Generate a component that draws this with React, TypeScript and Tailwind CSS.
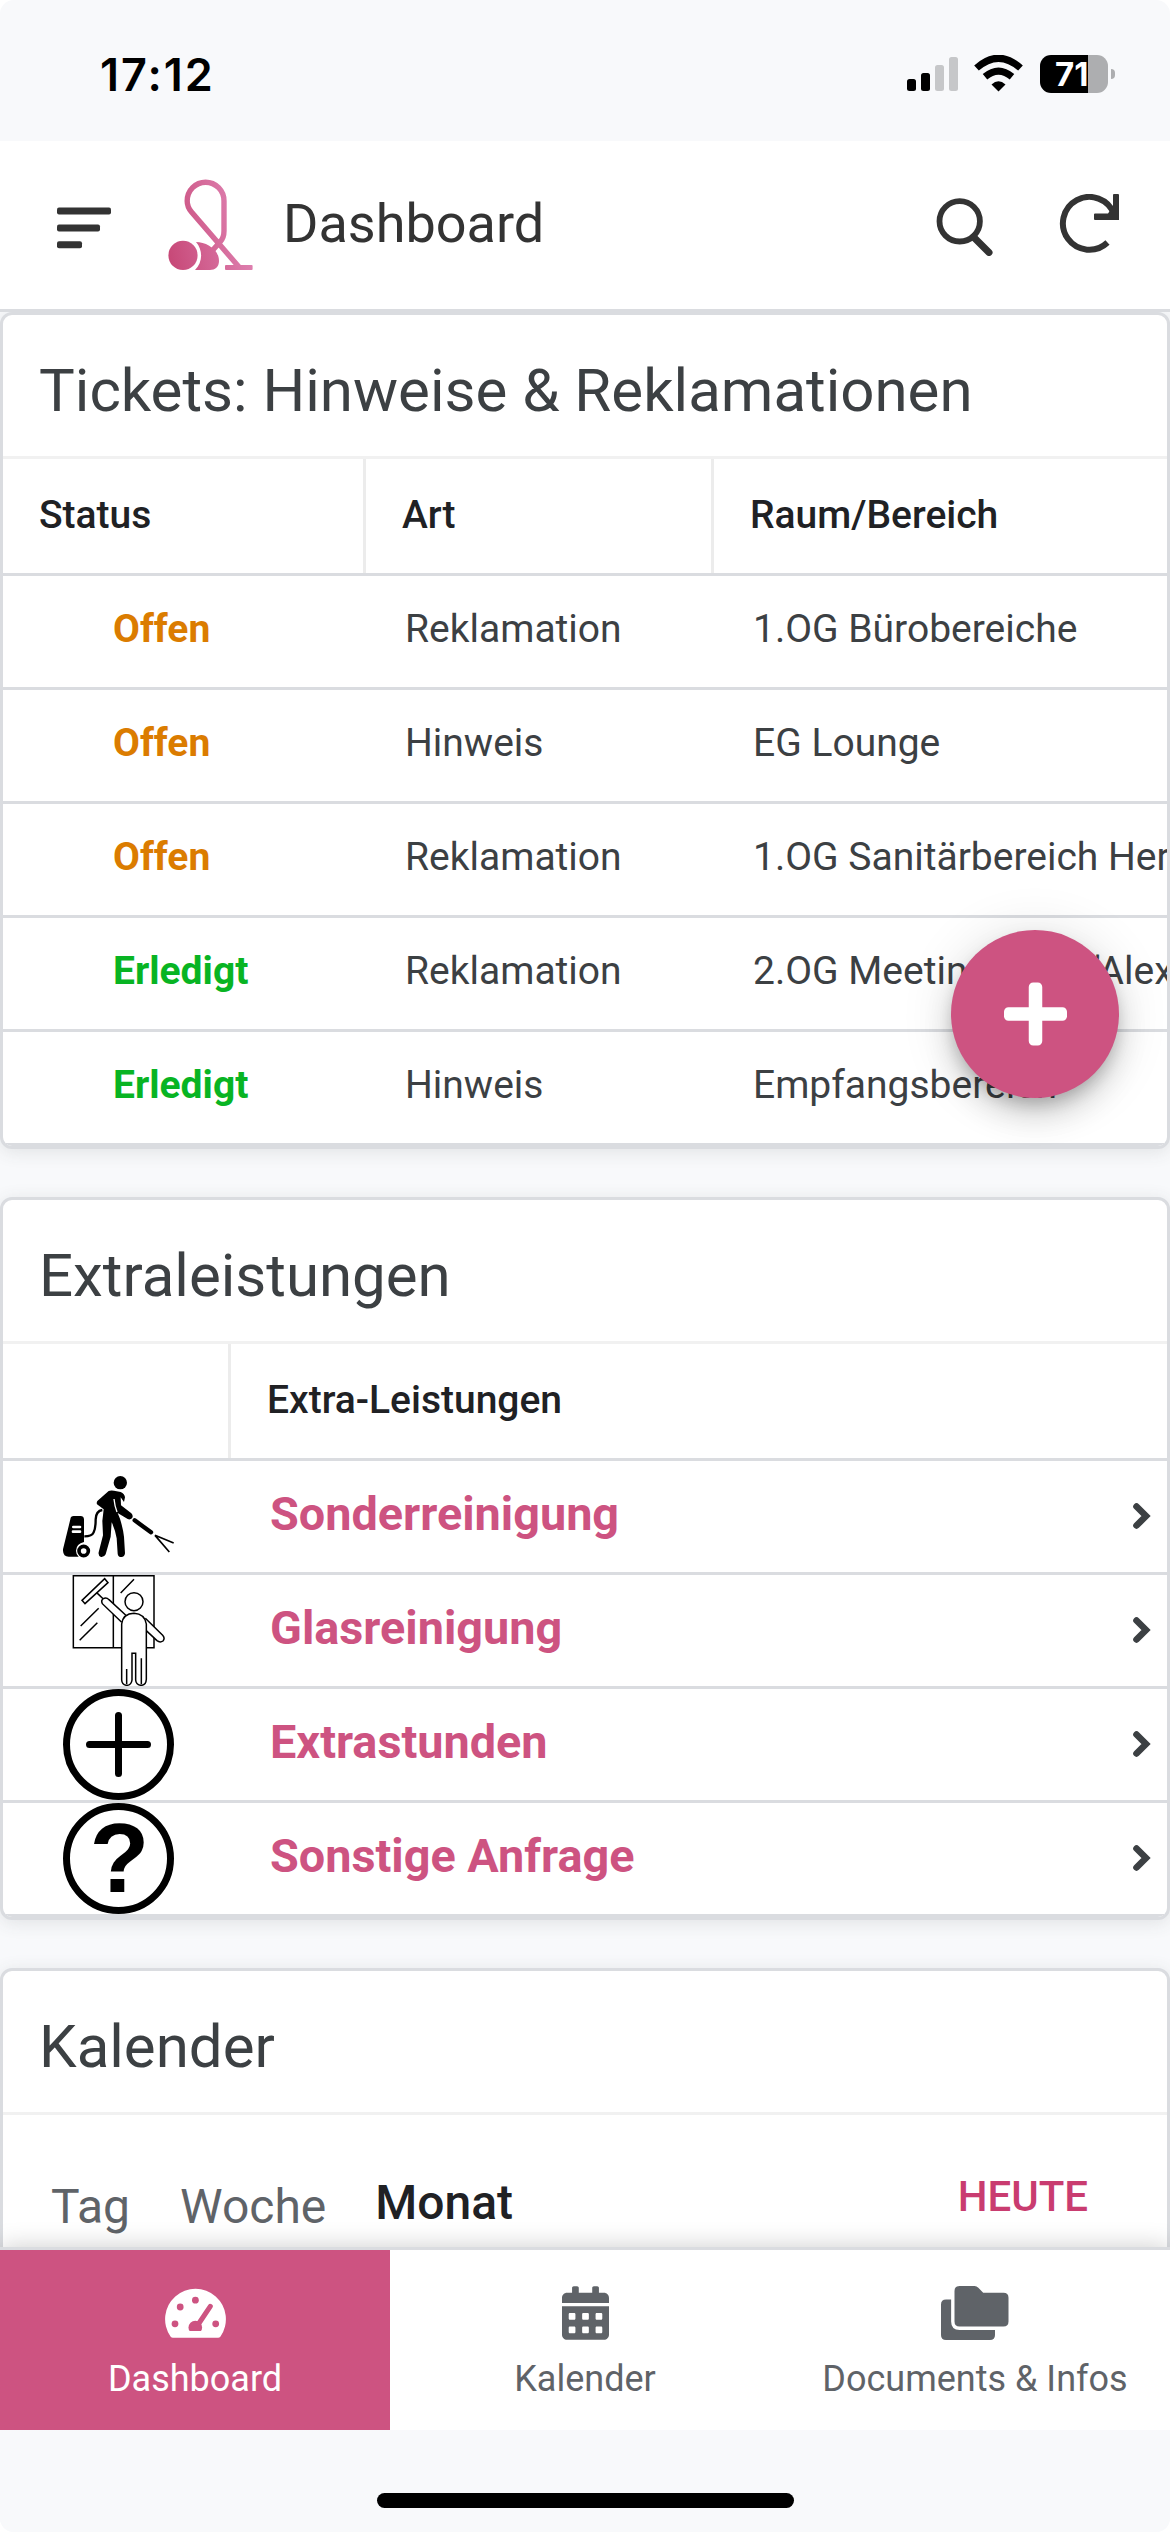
import { FaCalendarAlt, FaPlus } from "react-icons/fa";

const tickets = [
  { status: "Offen", art: "Reklamation", raum: "1.OG Bürobereiche" },
  { status: "Offen", art: "Hinweis", raum: "EG Lounge" },
  { status: "Offen", art: "Reklamation", raum: "1.OG Sanitärbereich Herren" },
  { status: "Erledigt", art: "Reklamation", raum: '2.OG Meetingraum "Alex"' },
  { status: "Erledigt", art: "Hinweis", raum: "Empfangsbereich" },
];

const extras = [
  { label: "Sonderreinigung", Icon: PressureWasherIcon },
  { label: "Glasreinigung", Icon: WindowCleanerIcon },
  { label: "Extrastunden", Icon: PlusCircleIcon },
  { label: "Sonstige Anfrage", Icon: QuestionIcon },
];

function PressureWasherIcon() {
  return (
    <svg viewBox="39 3 333 333" className="size-[111px]">
      <circle cx="211" cy="68" r="20" />
      <path d="M176 93 Q182 90 192 92 L212 96 Q224 102 225 112 L222 126 L212 112 L213 136 L244 160 Q251 168 246 175 Q240 180 233 177 L203 159 L210 176 Q219 205 222 230 L225 280 Q224 291 214 291 Q204 291 203 281 L200 235 Q196 210 185 187 L182 230 L167 283 Q163 292 153 291 Q144 287 146 277 L159 226 L157 183 L161 148 L141 133 Q139 128 142 123 Z" />
      <path d="M192 117 Q194 138 201 156" fill="none" stroke="#fff" strokeWidth="4" />
      <path d="M157 150 Q138 153 137 178 Q137 205 131 217 Q126 229 103 229" fill="none" stroke="#000" strokeWidth="7" />
      <path d="M61 178 Q62 168 71 168 H92 Q101 168 102 178 V246 Q79 251 78 272 Q78 283 86 290 H56 Q38 290 39 268 Z" />
      <path d="M70 201 H90 M69 215 H90" stroke="#fff" strokeWidth="8" strokeLinecap="round" />
      <circle cx="101" cy="273" r="14" fill="none" stroke="#000" strokeWidth="11" />
      <path d="M254 181 L303 217" stroke="#000" strokeWidth="13" strokeLinecap="round" />
      <path d="M371 249 L315 226 L358 276" fill="none" stroke="#000" strokeWidth="5" />
    </svg>
  );
}

function WindowCleanerIcon() {
  return (
    <svg viewBox="39 345 333 333" className="size-[111px]" fill="none" stroke="#000" strokeWidth="4.5">
      <path d="M70 347 H312 V563 H70 Z M190 347 V563" />
      <path d="M212 399 L252 358 M92 498 L146 445 M89 541 L142 488" />
      <path d="M96 421 L164 356 L174 368 L105 431 Z" fill="#fff" />
      <path d="M140 398 L160 417" />
      <path d="M215 487 L157 431 Q152 421 160 416 Q169 411 177 419 L230 468" fill="#fff" />
      <path d="M286 475 L338 526 Q346 535 339 543 Q330 549 321 542 L288 511" fill="#fff" />
      <path d="M215 660 V492 Q219 461 252 460 Q284 462 289 492 V658 Q288 676 273 676 Q258 675 257 660 V580 H246 V660 Q244 676 230 676 Q216 675 215 660 Z" fill="#fff" />
      <path d="M230 627 V672 M274 595 V672" />
      <circle cx="252" cy="425" r="27" fill="#fff" />
    </svg>
  );
}

function PlusCircleIcon() {
  return (
    <svg viewBox="0 0 111 111" className="size-[111px]" fill="none" stroke="#000">
      <circle cx="55.5" cy="55.5" r="52" strokeWidth="7" />
      <path d="M26.5 55.5 H84.5 M55.5 26.5 V84.5" strokeWidth="7" strokeLinecap="round" />
    </svg>
  );
}

function QuestionIcon() {
  return (
    <svg viewBox="0 0 111 111" className="size-[111px]">
      <circle cx="55.5" cy="55.5" r="52" strokeWidth="7" fill="none" stroke="#000" />
      <text x="56.5" y="88.5" textAnchor="middle" className="font-['Liberation_Sans',sans-serif] text-[98px] font-bold">?</text>
    </svg>
  );
}

function GaugeIcon() {
  return (
    <svg viewBox="0 0 61 54" className="h-[54px] w-[61px]">
      <path d="M5.5 50.5 A30.4 30.4 0 1 1 55.5 50.5 Q54.5 51.7 53 51.7 H8 Q6.5 51.7 5.5 50.5Z" fill="currentColor" />
      <g fill="#cd5381">
        <circle cx="30.4" cy="14.2" r="3.4" />
        <circle cx="15.2" cy="21" r="3.4" />
        <circle cx="10" cy="37.8" r="3.4" />
        <circle cx="50.7" cy="37.8" r="3.4" />
        <path d="M24.6 45 Q23.5 43.5 23.5 41.5 A6.8 6.8 0 0 1 37.1 41.5 Q37.1 43.5 36 45Z" />
      </g>
      <path d="M45.3 20.3 L33.5 38" stroke="#cd5381" strokeWidth="5" strokeLinecap="round" />
    </svg>
  );
}

function FoldersIcon() {
  return (
    <svg viewBox="0 0 640 512" className="h-[54px] w-[67.5px]" fill="currentColor">
      <path d="M592 64H400L354 16Q338 0 318 0H176Q128 0 128 48V336Q128 384 176 384H592Q640 384 640 336V112Q640 64 592 64Z" />
      <path d="M464 512H48Q0 512 0 464V176Q0 128 48 128H96V336Q96 416 176 416H512V464Q512 512 464 512Z" />
    </svg>
  );
}

function LogoIcon() {
  return (
    <svg viewBox="168 178 86 92" className="h-[92px] w-[86px]">
      <defs>
        <linearGradient id="logo" gradientUnits="userSpaceOnUse" x1="168" y1="255" x2="253" y2="235">
          <stop offset="0" stopColor="#c74877" />
          <stop offset="1" stopColor="#e084b4" />
        </linearGradient>
      </defs>
      <circle cx="183" cy="254.4" r="14.6" fill="url(#logo)" />
      <path d="M196 241 C206 241 219 248 219 260 C219 266 215 269 210 269 H195 C203 261 203 249 196 241Z" fill="url(#logo)" />
      <path d="M239 266 L191.5 211 Q187.2 206 187.2 200 A18.4 18.8 0 0 1 224 200 V230 Q224 237 220 241 L212 250" fill="none" stroke="url(#logo)" strokeWidth="5.4" />
      <rect x="225" y="264" width="27.6" height="5" rx="1" fill="url(#logo)" />
    </svg>
  );
}

function StatusBar() {
  return (
    <div className="flex h-[141px] shrink-0 items-start justify-between pl-[100px] pr-[55px]">
      <span className="mt-[47px] font-['Inter',sans-serif] text-[45px] font-semibold leading-[55px] tracking-[2px]">17:12</span>
      <div className="mt-[55px] flex">
        <svg viewBox="0 0 51 38" className="h-[38px] w-[51px]">
          <rect x="0" y="24" width="9" height="12" rx="2.5" />
          <rect x="14" y="18" width="9" height="18" rx="2.5" />
          <rect x="28" y="10" width="9" height="26" rx="2.5" fill="#c6c7c9" />
          <rect x="42" y="2" width="9" height="34" rx="2.5" fill="#c6c7c9" />
        </svg>
        <svg viewBox="0 0 49 38" className="ml-[16px] h-[38px] w-[49px]">
          <path d="M2.5 13 Q24.5 -6.5 46.5 13" fill="none" stroke="#000" strokeWidth="7" />
          <path d="M11 21.8 Q24.5 10.5 38 21.8" fill="none" stroke="#000" strokeWidth="7" />
          <path d="M17.5 29.5 Q24.5 23 31.5 29.5 L24.5 36.5Z" />
        </svg>
        <div className="ml-[17px] flex h-[38px] w-[68px] items-center overflow-hidden rounded-[11px] bg-[linear-gradient(to_right,#000_48px,#adaeb0_48px)] pl-[15px]">
          <span className="font-['Inter',sans-serif] text-[33px] font-bold leading-none text-white">71</span>
        </div>
        <div className="ml-[3px] mt-[14px] h-[10px] w-[4px] rounded-r-full bg-[#adaeb0]" />
      </div>
    </div>
  );
}

function Header() {
  return (
    <header className="flex h-[171px] shrink-0 items-center border-b-3 border-[#dadce0] bg-white pl-[57px] pr-[51px] text-[#333]">
      <svg viewBox="0 0 54 42" className="mt-[5px] h-[42px] w-[54px]" fill="#333">
        <rect y="0.5" width="54" height="7" rx="2" />
        <rect y="17.5" width="43" height="7" rx="2" />
        <rect y="34.3" width="25" height="7" rx="2" />
      </svg>
      <div className="ml-[57px]">
        <LogoIcon />
      </div>
      <h1 className="ml-[29px] mt-[-3px] text-[54px]">Dashboard</h1>
      <svg viewBox="936 194 183 62" className="ml-auto h-[62px] w-[183px]" fill="none" stroke="#333">
        <circle cx="959.7" cy="221.3" r="20.2" strokeWidth="5.8" />
        <path d="M973.5 237 L989 252.5" strokeWidth="7" strokeLinecap="round" />
        <path d="M1114 214 A26.4 26.4 0 1 0 1107.5 242.5" strokeWidth="6" />
        <path d="M1113 195 Q1113 194 1114 194 H1118 Q1119 194 1119 195 V220 H1095 Q1094 220 1094 219 V214.5 Q1094 213.5 1095 213.5 H1108 L1113 206 Z" fill="#333" stroke="none" />
      </svg>
    </header>
  );
}

function Card({ title, children }) {
  return (
    <section className="shrink-0 overflow-hidden rounded-[12px] border-3 border-[#dadce0] bg-white shadow-[0_3px_18px_rgba(60,64,67,0.12)]">
      <h2 className="h-[144px] border-b-3 border-[#f1f1f1] pl-[36px] pt-[5px] text-[60px] leading-[141px] text-[#3c4043]">{title}</h2>
      {children}
    </section>
  );
}

function TicketsTable() {
  return (
    <div className="whitespace-nowrap text-[39px] text-[#3c4043]">
      <div className="flex h-[117px] border-b-3 border-[#dadce0] font-medium leading-[112px] text-[#202124]">
        <div className="w-[363px] border-r-3 border-[#ececec] pl-[36px]">Status</div>
        <div className="w-[348px] border-r-3 border-[#ececec] pl-[36px]">Art</div>
        <div className="pl-[36px]">Raum/Bereich</div>
      </div>
      {tickets.map((t, i) => (
        <div key={i} className="flex h-[114px] border-b-3 border-[#dadce0] leading-[107px]">
          <div className={t.status === "Offen" ? "w-[363px] pl-[110px] font-bold text-[#db7c00]" : "w-[363px] pl-[110px] font-bold text-[#08b423]"}>
            {t.status}
          </div>
          <div className="w-[348px] pl-[39px]">{t.art}</div>
          <div className="w-[453px] overflow-hidden pl-[39px]">{t.raum}</div>
        </div>
      ))}
    </div>
  );
}

function ExtrasTable() {
  return (
    <div>
      <div className="flex h-[117px] border-b-3 border-[#dadce0] text-[39px] font-medium leading-[112px] text-[#202124]">
        <div className="w-[228px] border-r-3 border-[#ececec]" />
        <div className="pl-[36px]">Extra-Leistungen</div>
      </div>
      {extras.map(({ label, Icon }) => (
        <div key={label} className="flex h-[114px] border-b-3 border-[#dadce0] pl-[60px]">
          <Icon />
          <div className="ml-[96px] flex-1 text-[46.8px] font-bold leading-[107px] text-[#cd5381]">{label}</div>
          <svg viewBox="0 0 18 26" className="mr-[16px] mt-[42px] h-[26px] w-[18px]" fill="none" stroke="#3c4043" strokeWidth="6.6" strokeLinecap="round">
            <path d="M3.5 3.5 L13 13 L3.5 22.5" />
          </svg>
        </div>
      ))}
    </div>
  );
}

function BottomNav() {
  return (
    <nav className="relative grid h-[183px] shrink-0 grid-cols-3 border-t-3 border-[#dadce0] bg-white text-[36px] leading-[42px] text-[#5f6368] shadow-[0_0_24px_rgba(0,0,0,0.2)]">
      <div className="flex flex-col items-center bg-[#cd5381] pt-[36px] text-white">
        <GaugeIcon />
        <span className="mt-[18px]">Dashboard</span>
      </div>
      <div className="flex flex-col items-center pt-[36px]">
        <FaCalendarAlt className="h-[54px] w-[47px]" />
        <span className="mt-[18px]">Kalender</span>
      </div>
      <div className="flex flex-col items-center pt-[36px]">
        <FoldersIcon />
        <span className="mt-[18px]">Documents &amp; Infos</span>
      </div>
    </nav>
  );
}

export default function App() {
  return (
    <div className="bg-white">
      <div className="relative flex h-[2532px] w-[1170px] flex-col overflow-hidden rounded-[14px] bg-[#f8f9fb] font-['Roboto',sans-serif] text-black">
        <StatusBar />
        <Header />
        <main className="flex h-[1935px] shrink-0 flex-col gap-12 overflow-hidden">
          <Card title="Tickets: Hinweise & Reklamationen">
            <TicketsTable />
          </Card>
          <Card title="Extraleistungen">
            <ExtrasTable />
          </Card>
          <Card title="Kalender">
            <div className="flex h-[200px] items-start pl-[48px] pr-[79px] text-[48px] leading-[56px] text-[#5f6368]">
              <span className="mt-[64px]">Tag</span>
              <span className="ml-[50px] mt-[64px]">Woche</span>
              <span className="ml-[49px] mt-[60px] font-medium text-[#202124]">Monat</span>
              <span className="ml-auto mt-[54px] text-[42px] font-medium text-[#c93c70]">HEUTE</span>
            </div>
          </Card>
        </main>
        <BottomNav />
        <div className="relative flex-1 bg-[#f8f9fb] pt-[63px]">
          <div className="mx-auto h-[15px] w-[417px] rounded-full bg-black" />
        </div>
        <button className="absolute left-[951px] top-[930px] flex size-[168px] items-center justify-center rounded-full bg-[#cd5381] text-white shadow-[0_9px_15px_-3px_rgba(0,0,0,0.2),0_18px_30px_rgba(0,0,0,0.14),0_3px_54px_rgba(0,0,0,0.12)]">
          <FaPlus className="h-[72px] w-[63px]" />
        </button>
      </div>
    </div>
  );
}
